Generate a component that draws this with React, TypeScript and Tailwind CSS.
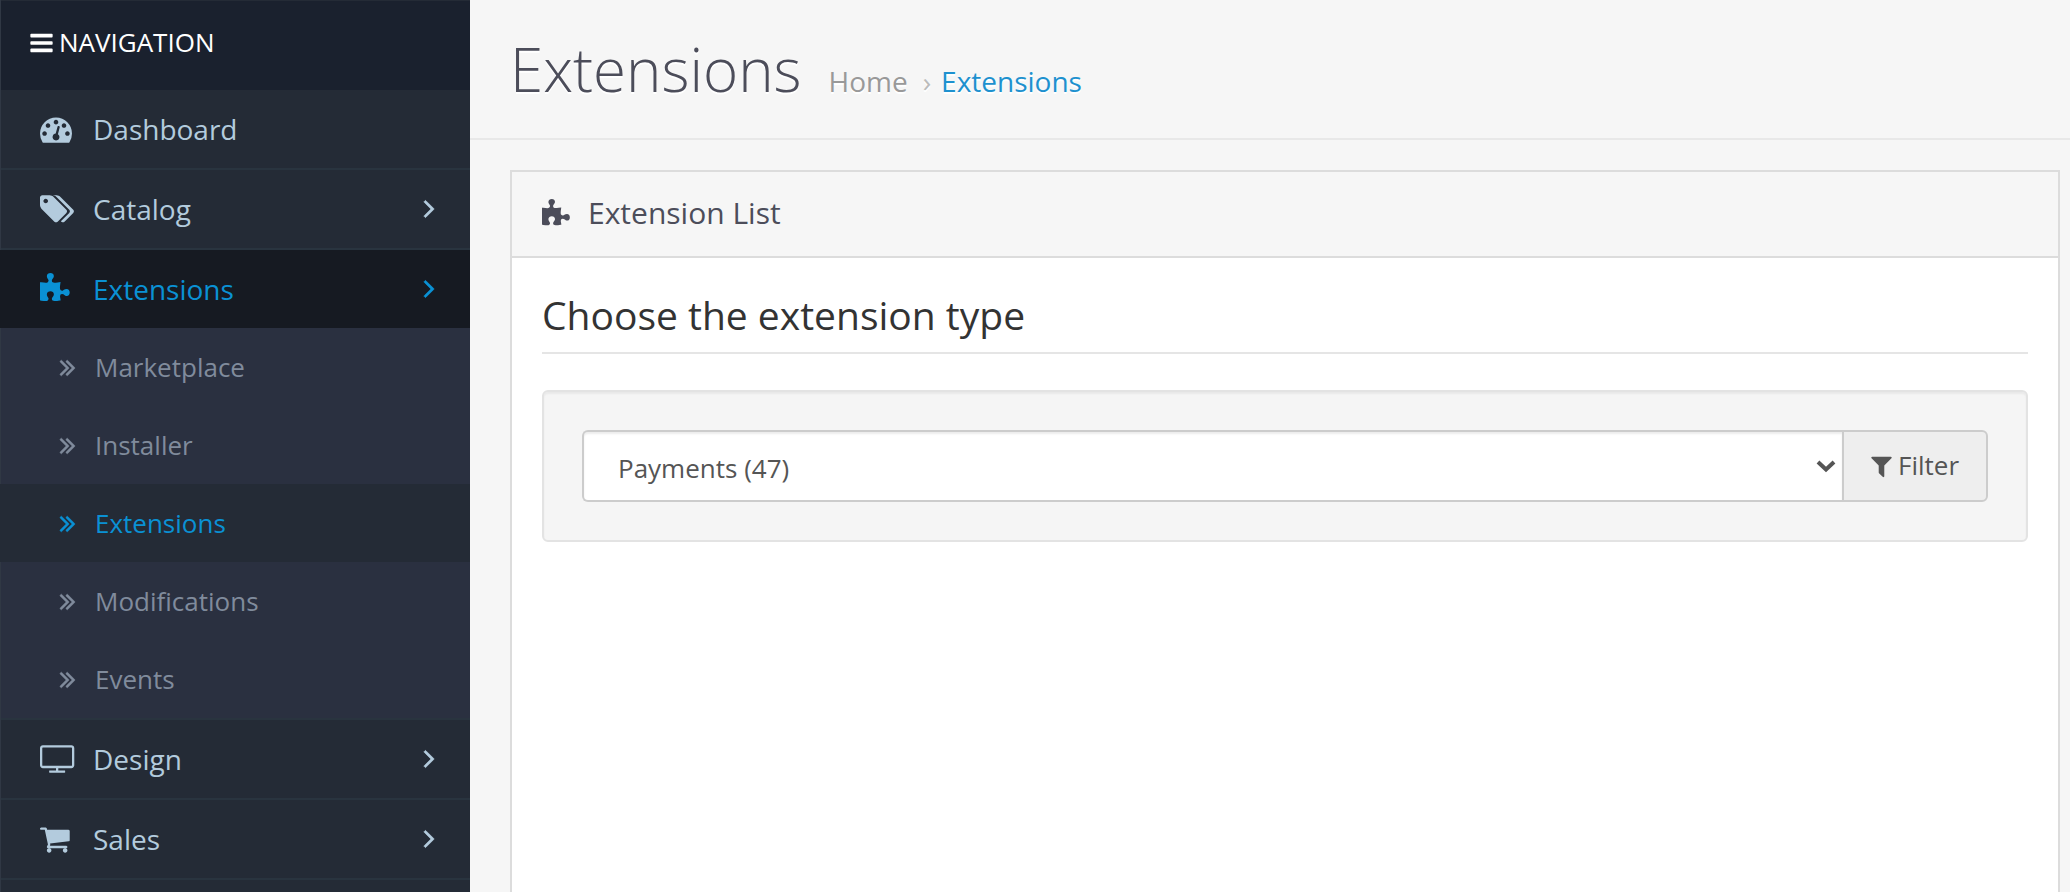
import React from "react";

type Glyph = { box: string; d: string };

const glyphs: Record<string, Glyph> = {
  dashboard: {
    box: "0 0 1792 1792",
    d: "M384 1152q0-53-37.5-90.5t-90.5-37.5-90.5 37.5-37.5 90.5 37.5 90.5 90.5 37.5 90.5-37.5 37.5-90.5zm192-448q0-53-37.5-90.5t-90.5-37.5-90.5 37.5-37.5 90.5 37.5 90.5 90.5 37.5 90.5-37.5 37.5-90.5zm428 481l101-382q6-26-7.5-48.5t-38.5-29.5-48 6.5-30 39.5l-101 382q-60 5-107 43.5t-63 98.5q-20 77 20 146t117 89 146-20 89-117q16-60-6-117t-72-91zm660-33q0-53-37.5-90.5t-90.5-37.5-90.5 37.5-37.5 90.5 37.5 90.5 90.5 37.5 90.5-37.5 37.5-90.5zm-640-640q0-53-37.5-90.5t-90.5-37.5-90.5 37.5-37.5 90.5 37.5 90.5 90.5 37.5 90.5-37.5 37.5-90.5zm448 192q0-53-37.5-90.5t-90.5-37.5-90.5 37.5-37.5 90.5 37.5 90.5 90.5 37.5 90.5-37.5 37.5-90.5zm320 448q0 261-141 483-19 29-54 29h-1402q-35 0-54-29-141-221-141-483 0-182 71-348t191-286 286-191 348-71 348 71 286 191 191 286 71 348z",
  },
  tags: {
    box: "0 0 1792 1792",
    d: "M448 448q0-53-37.5-90.5t-90.5-37.5-90.5 37.5-37.5 90.5 37.5 90.5 90.5 37.5 90.5-37.5 37.5-90.5zm1067 576q0 53-37 90l-491 492q-39 37-91 37-53 0-90-37l-715-716q-38-37-64.5-101t-26.5-117v-416q0-52 38-90t90-38h416q53 0 117 26.5t102 64.5l715 714q37 39 37 91zm384 0q0 53-37 90l-491 492q-39 37-91 37-36 0-59-14t-53-45l470-470q37-37 37-90 0-52-37-91l-715-714q-38-38-102-64.5t-117-26.5h224q53 0 117 26.5t102 64.5l715 714q37 39 37 91z",
  },
  puzzle: {
    box: "128 0 1792 1792",
    d: "M1792 1098q0 81-44.5 135t-123.5 54q-41 0-77.5-17.5t-59-38-56.5-38-71-17.5q-110 0-110 124 0 39 16 115t15 115v5q-22 0-33 1-34 3-97.5 11.5t-115.5 13.5-98 5q-61 0-103-26.5t-42-83.5q0-37 17.5-71t38-56.5 38-59 17.5-77.5q0-79-54-123.5t-135-44.5q-84 0-143 45.5t-59 127.5q0 43 15 83t33.5 64.5 33.5 53 15 50.5q0 45-46 89-37 35-117 35-95 0-245-24-9-2-27.5-4t-27.5-4l-13-2q-1 0-3-1-2 0-2-1v-1024q2 1 17.5 3.5t34 5 21.5 3.5q150 24 245 24 80 0 117-35 46-44 46-89 0-22-15-50.5t-33.5-53-33.5-64.5-15-83q0-82 59-127.5t144-45.5q80 0 134 44.5t54 123.5q0 41-17.5 77.5t-38 59-38 56.5-17.5 71q0 57 42 83.5t103 26.5q64 0 180-15t163-17v2q-1 2-3.5 17.5t-5 34-3.5 21.5q-24 150-24 245 0 80 35 117 44 46 89 46 22 0 50.5-15t53-33.5 64.5-33.5 83-15q82 0 127.5 59t45.5 143z",
  },
  screen: {
    box: "-64 -128 1792 1792",
    d: "M1728 1120v-960q0-13-9.5-22.5t-22.5-9.5h-1600q-13 0-22.5 9.5t-9.5 22.5v960q0 13 9.5 22.5t22.5 9.5h1600q13 0 22.5-9.5t9.5-22.5zm128-960v960q0 66-47 113t-113 47h-736v128h352q14 0 23 9t9 23v64q0 14-9 23t-23 9h-832q-14 0-23-9t-9-23v-64q0-14 9-23t23-9h352v-128h-736q-66 0-113-47t-47-113v-960q0-66 47-113t113-47h1600q66 0 113 47t47 113z",
  },
  cart: {
    box: "64 0 1792 1792",
    d: "M704 1536q0 52-38 90t-90 38-90-38-38-90 38-90 90-38 90 38 38 90zm896 0q0 52-38 90t-90 38-90-38-38-90 38-90 90-38 90 38 38 90zm128-1088v512q0 24-16.5 42.5t-40.5 21.5l-1044 122q13 60 13 70 0 16-24 64h920q26 0 45 19t19 45-19 45-45 19h-1024q-26 0-45-19t-19-45q0-11 8-31.5t16-36 21.5-40 15.5-29.5l-177-823h-204q-26 0-45-19t-19-45 19-45 45-19h256q16 0 28.5 6.5t19.5 15.5 13 24.5 8 26 5.5 29.5 4.5 26h1201q26 0 45 19t19 45z",
  },
  filter: {
    box: "192 0 1408 1792",
    d: "M1595 295q17 41-14 70l-493 493v742q0 42-39 59-13 5-25 5-27 0-45-19l-256-256q-19-19-19-45v-486l-493-493q-31-29-14-70 17-39 59-39h1280q42 0 59 39z",
  },
  bars: {
    box: "128 0 1536 1792",
    d: "M1664 1344v128q0 26-19 45t-45 19h-1408q-26 0-45-19t-19-45v-128q0-26 19-45t45-19h1408q26 0 45 19t19 45zm0-512v128q0 26-19 45t-45 19h-1408q-26 0-45-19t-19-45v-128q0-26 19-45t45-19h1408q26 0 45 19t19 45zm0-512v128q0 26-19 45t-45 19h-1408q-26 0-45-19t-19-45v-128q0-26 19-45t45-19h1408q26 0 45 19t19 45z",
  },
  angle: {
    box: "587 461 586 998",
    d: "M1171 960q0 13-10 23l-466 466q-10 10-23 10t-23-10l-50-50q-10-10-10-23t10-23l393-393-393-393q-10-10-10-23t10-23l50-50q10-10 23-10t23 10l466 466q10 10 10 23z",
  },
  angles: {
    box: "395 461 970 998",
    d: "M979 960q0 13-10 23l-466 466q-10 10-23 10t-23-10l-50-50q-10-10-10-23t10-23l393-393-393-393q-10-10-10-23t10-23l50-50q10-10 23-10t23 10l466 466q10 10 10 23zm384 0q0 13-10 23l-466 466q-10 10-23 10t-23-10l-50-50q-10-10-10-23t10-23l393-393-393-393q-10-10-10-23t10-23l50-50q10-10 23-10t23 10l466 466q10 10 10 23z",
  },
};

function Icon({ name, className }: { name: string; className: string }) {
  const g = glyphs[name];
  return (
    <svg viewBox={g.box} className={`shrink-0 overflow-visible ${className}`} fill="currentColor" aria-hidden="true">
      <path d={g.d} />
    </svg>
  );
}

function MenuLink({ icon, label, arrow, active }: { icon: string; label: string; arrow?: boolean; active?: boolean }) {
  return (
    <a
      className={`flex h-[78px] items-center pl-10 pr-9 ${
        active ? "bg-[#161a22] text-[#0a91d4]" : "text-[#b3cbdd]"
      }`}
    >
      <Icon name={icon} className="size-8" />
      <span className="ml-[21px] text-[28px] leading-10">{label}</span>
      {arrow && <Icon name="angle" className="ml-auto h-[18px] w-[10px] stroke-current stroke-[40]" />}
    </a>
  );
}

function SubLink({ label, active }: { label: string; active?: boolean }) {
  return (
    <a
      className={`flex h-[78px] items-center pl-[60px] text-[26px] leading-9 ${
        active ? "bg-[#242b36] text-[#0a91d4]" : "text-[#808b9c]"
      }`}
    >
      <Icon name="angles" className="mt-px h-4 w-[15px] stroke-current stroke-[40]" />
      <span className="ml-5">{label}</span>
    </a>
  );
}

const subItems = ["Marketplace", "Installer", "Extensions", "Modifications", "Events"];

export default function App() {
  return (
    <div className="flex h-[892px] w-full overflow-hidden bg-[#f6f6f6] font-['Open_Sans',sans-serif]">
      <nav className="w-[470px] shrink-0 border-l border-[#303844] bg-[#242b36] [&_a]:-ml-px">
        <div className="flex h-[90px] items-center border-t border-[#242b36] bg-[#1a212e] pl-[29px] text-[26px] text-white">
          <Icon name="bars" className="mb-[5px] h-[26px] w-[23px]" />
          <span className="mb-[7px] ml-[6px]">NAVIGATION</span>
        </div>
        <ul className="[&>li]:border-b-2 [&>li]:border-[#29343f]">
          <li>
            <MenuLink icon="dashboard" label="Dashboard" />
          </li>
          <li>
            <MenuLink icon="tags" label="Catalog" arrow />
          </li>
          <li>
            <MenuLink icon="puzzle" label="Extensions" arrow active />
            <div className="bg-[#2a3040]">
              {subItems.map((s) => (
                <SubLink key={s} label={s} active={s === "Extensions"} />
              ))}
            </div>
          </li>
          <li>
            <MenuLink icon="screen" label="Design" arrow />
          </li>
          <li>
            <MenuLink icon="cart" label="Sales" arrow />
          </li>
        </ul>
      </nav>

      <main className="flex min-w-0 flex-1 flex-col">
        <header className="flex h-[140px] shrink-0 items-baseline border-b-2 border-[#e8e8e8] pl-10 pt-[29px] [text-shadow:0_2px_#fff]">
          <h1 className="text-[60px] font-light leading-[80px] text-[#4c4d5a]">Extensions</h1>
          <div className="ml-[27px] flex items-baseline text-[28px] leading-10">
            <span className="text-[#999999]">Home</span>
            <span className="ml-[15px] mr-[10px] text-[#bbbbbb]">›</span>
            <span className="text-[#1e91cf]">Extensions</span>
          </div>
        </header>

        <section className="ml-10 mr-[10px] mt-[30px] flex-1 border-2 border-b-0 border-[#dcdcdc] bg-white">
          <div className="flex h-[86px] items-center border-b-2 border-[#dcdcdc] bg-[#f6f6f6] pl-[30px] text-[#4c4d5a]">
            <Icon name="puzzle" className="size-[30px]" />
            <h3 className="mb-[2px] ml-4 text-[30px] leading-10">Extension List</h3>
          </div>
          <div className="px-[30px] pt-[30px]">
            <h2 className="h-[66px] border-b-2 border-[#e5e5e5] text-[39px] leading-[54px] text-[#333333]">
              Choose the extension type
            </h2>
            <div className="mt-9 rounded-md border-2 border-[#e3e3e3] bg-[#f5f5f5] p-[38px] shadow-[inset_0_2px_2px_rgba(0,0,0,0.05)]">
              <div className="flex h-[72px] text-[26px] text-[#555555]">
                <div className="flex flex-1 items-center justify-between rounded-l-md border-2 border-r-0 border-[#cccccc] bg-white pl-[34px] pr-[6px] shadow-[inset_0_2px_2px_rgba(0,0,0,0.075)]">
                  <span className="mt-1">Payments (47)</span>
                  <svg viewBox="0 0 20 14" className="h-[14px] w-5" fill="none" stroke="currentColor" strokeWidth="4">
                    <path d="M2 3l8 7.5L18 3" />
                  </svg>
                </div>
                <div className="flex w-[146px] items-center rounded-r-md border-2 border-[#cccccc] bg-[#eeeeee] pl-[27px]">
                  <Icon name="filter" className="h-[26px] w-[21px]" />
                  <span className="mb-[2px] ml-[6px]">Filter</span>
                </div>
              </div>
            </div>
          </div>
        </section>
      </main>
    </div>
  );
}
